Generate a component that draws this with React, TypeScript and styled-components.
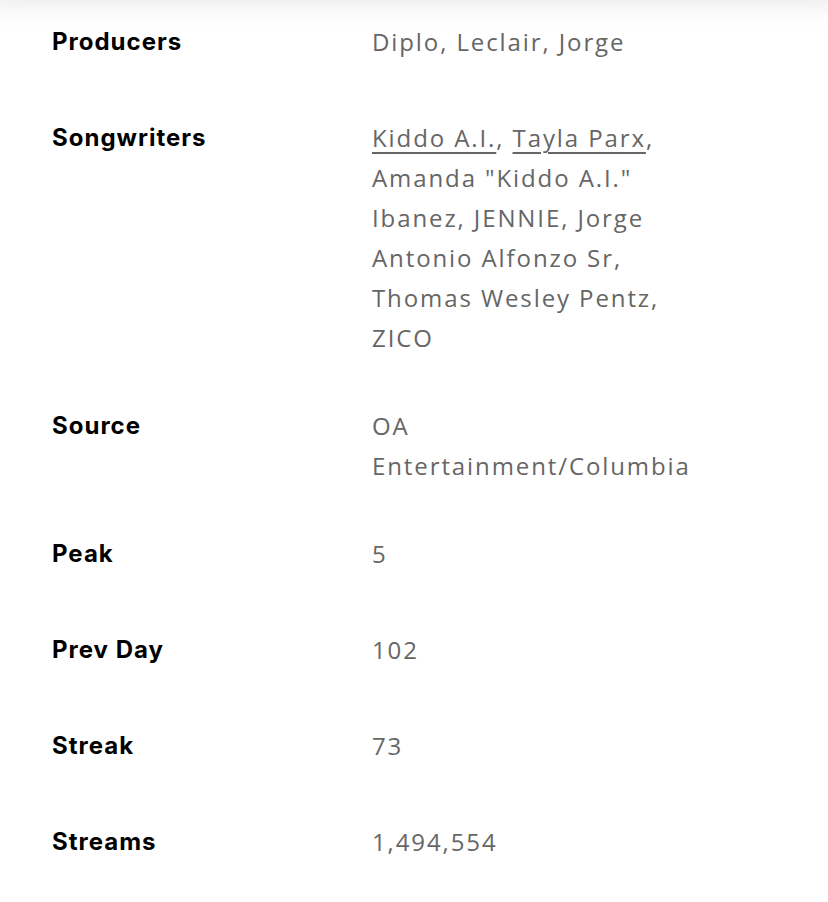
import React from "react";
import styled, { createGlobalStyle } from "styled-components";

const Global = createGlobalStyle`
  html, body { margin: 0; padding: 0; background: #ffffff; }
  body { font-family: "Open Sans", "Noto Sans", sans-serif; -webkit-font-smoothing: antialiased; }
`;

const Page = styled.div`
  position: relative;
  width: 828px;
  min-height: 902px;
  background: #ffffff;
  overflow: hidden;
  &::before {
    content: "";
    position: absolute;
    left: -20px;
    right: -20px;
    top: -30px;
    height: 30px;
    border-radius: 30px;
    box-shadow: 0 0 30px rgba(0, 0, 0, 0.12);
  }
`;

const List = styled.dl`
  margin: 0;
  padding: 22px 0 0 52px;
  display: flex;
  flex-direction: column;
  gap: 48px;
`;

const Row = styled.div`
  display: grid;
  grid-template-columns: 320px 310px;
  align-items: start;
  min-height: 48px;
`;

const Label = styled.dt`
  margin: 0;
  font-family: "Inter", "Open Sans", sans-serif;
  font-size: 24px;
  line-height: 40px;
  font-weight: 700;
  color: #000000;
  letter-spacing: 1px;
`;

const Value = styled.dd`
  margin: 0;
  font-family: "Open Sans", "Noto Sans", sans-serif;
  font-size: 24px;
  line-height: 40px;
  font-weight: 400;
  letter-spacing: 1.9px;
  color: #666666;
`;

const Link = styled.a`
  color: inherit;
  text-decoration: underline;
  text-underline-offset: 5px;
  text-decoration-thickness: 2px;
`;

type Item = { label: string; value: React.ReactNode };

const items: Item[] = [
  { label: "Producers", value: "Diplo, Leclair, Jorge" },
  {
    label: "Songwriters",
    value: (
      <>
        <Link href="#">Kiddo A.I.</Link>, <Link href="#">Tayla Parx</Link>, Amanda "Kiddo A.I."
        Ibanez, JENNIE, Jorge Antonio Alfonzo Sr, Thomas Wesley Pentz, ZICO
      </>
    ),
  },
  { label: "Source", value: "OA Entertainment/Columbia" },
  { label: "Peak", value: "5" },
  { label: "Prev Day", value: "102" },
  { label: "Streak", value: "73" },
  { label: "Streams", value: "1,494,554" },
];

export default function App() {
  return (
    <>
      <Global />
      <Page>
        <List>
          {items.map((it) => (
            <Row key={it.label}>
              <Label>{it.label}</Label>
              <Value>{it.value}</Value>
            </Row>
          ))}
        </List>
      </Page>
    </>
  );
}
